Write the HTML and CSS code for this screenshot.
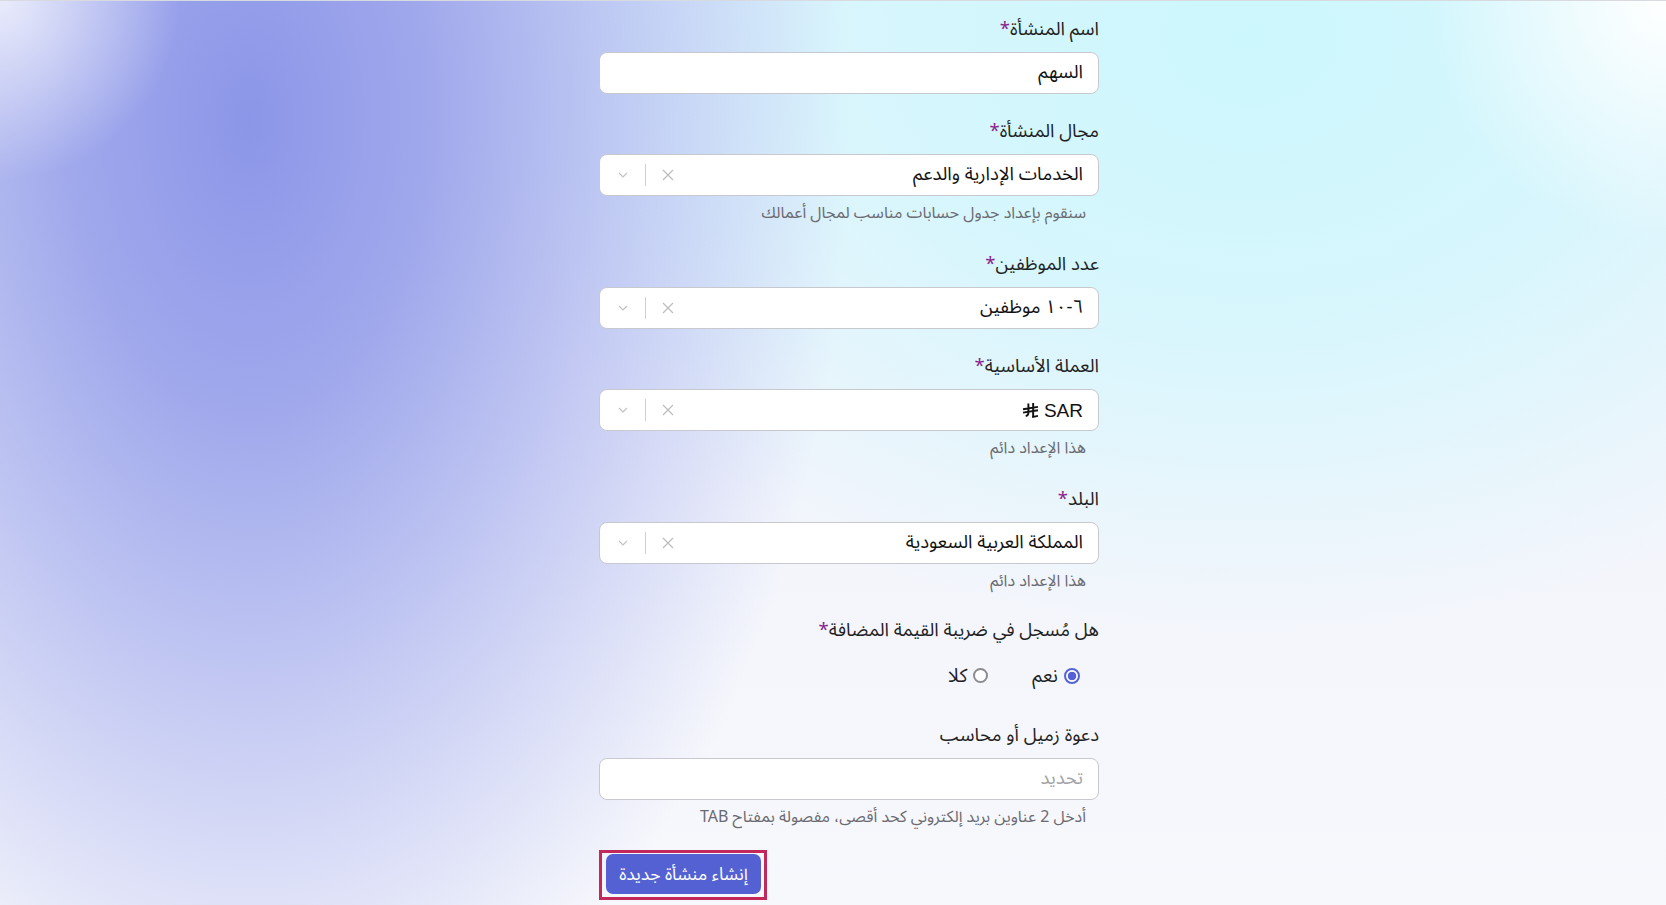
FILE: index.html
```html
<!DOCTYPE html>
<html lang="ar" dir="rtl">
<head>
<meta charset="utf-8">
<title>إنشاء منشأة جديدة</title>
<link rel="stylesheet" href="styles.css">
</head>
<body>
<main class="page">
  <form class="form">
    <div class="field">
      <div class="label">اسم المنشأة<span class="req">*</span></div>
      <div class="control"><span class="value">السهم</span></div>
    </div>

    <div class="field">
      <div class="label">مجال المنشأة<span class="req">*</span></div>
      <div class="control select">
        <span class="value">الخدمات الإدارية والدعم</span>
        <svg class="clear" width="12" height="12" viewBox="0 0 12 12"><path d="M1 1L11 11M11 1L1 11" stroke="#bdbdbd" stroke-width="1.3" fill="none"/></svg>
        <span class="sep"></span>
        <svg class="chev" width="10" height="6" viewBox="0 0 10 6"><path d="M1 1L5 5L9 1" stroke="#c2c2c2" stroke-width="1.2" fill="none"/></svg>
      </div>
      <div class="help">سنقوم بإعداد جدول حسابات مناسب لمجال أعمالك</div>
    </div>

    <div class="field">
      <div class="label">عدد الموظفين<span class="req">*</span></div>
      <div class="control select">
        <span class="value">٦-١٠ موظفين</span>
        <svg class="clear" width="12" height="12" viewBox="0 0 12 12"><path d="M1 1L11 11M11 1L1 11" stroke="#bdbdbd" stroke-width="1.3" fill="none"/></svg>
        <span class="sep"></span>
        <svg class="chev" width="10" height="6" viewBox="0 0 10 6"><path d="M1 1L5 5L9 1" stroke="#c2c2c2" stroke-width="1.2" fill="none"/></svg>
      </div>
    </div>

    <div class="field">
      <div class="label">العملة الأساسية<span class="req">*</span></div>
      <div class="control select">
        <span class="value"><span dir="ltr" class="cur"><svg class="riyal" width="17" height="17" viewBox="0 0 16 16"><path d="M6 1.5V10.5Q6 12.5 3.5 13.2M10.5 1V13.5M1 6.8L15 4.6M1 10L15 7.8M9.5 14.2L15 13" stroke="#111" stroke-width="1.8" fill="none"/></svg><span>SAR</span></span></span>
        <svg class="clear" width="12" height="12" viewBox="0 0 12 12"><path d="M1 1L11 11M11 1L1 11" stroke="#bdbdbd" stroke-width="1.3" fill="none"/></svg>
        <span class="sep"></span>
        <svg class="chev" width="10" height="6" viewBox="0 0 10 6"><path d="M1 1L5 5L9 1" stroke="#c2c2c2" stroke-width="1.2" fill="none"/></svg>
      </div>
      <div class="help">هذا الإعداد دائم</div>
    </div>

    <div class="field">
      <div class="label">البلد<span class="req">*</span></div>
      <div class="control select">
        <span class="value">المملكة العربية السعودية</span>
        <svg class="clear" width="12" height="12" viewBox="0 0 12 12"><path d="M1 1L11 11M11 1L1 11" stroke="#bdbdbd" stroke-width="1.3" fill="none"/></svg>
        <span class="sep"></span>
        <svg class="chev" width="10" height="6" viewBox="0 0 10 6"><path d="M1 1L5 5L9 1" stroke="#c2c2c2" stroke-width="1.2" fill="none"/></svg>
      </div>
      <div class="help">هذا الإعداد دائم</div>
    </div>

    <div class="field vat">
      <div class="label">هل مُسجل في ضريبة القيمة المضافة<span class="req">*</span></div>
      <div class="radios">
        <label class="radio"><span class="dot on"></span><span>نعم</span></label>
        <label class="radio"><span class="dot"></span><span>كلا</span></label>
      </div>
    </div>

    <div class="field last">
      <div class="label">دعوة زميل أو محاسب</div>
      <div class="control"><span class="placeholder">تحديد</span></div>
      <div class="help">أدخل 2 عناوين بريد إلكتروني كحد أقصى، مفصولة بمفتاح TAB</div>
    </div>

    <div class="actions">
      <div class="focus-ring"><button type="button" class="btn">إنشاء منشأة جديدة</button></div>
    </div>
  </form>
</main>
</body>
</html>
```
FILE: styles.css
```css
* { box-sizing: border-box; }
html, body { margin: 0; height: 100%; }
body {
  font-family: "Noto Sans Arabic", "Noto Sans", "DejaVu Sans", sans-serif;
  color: #222;
  border-top: 1px solid #d9dadf;
  overflow: hidden;
  background:
    radial-gradient(circle at 0 0, rgba(236,238,252,0.95) 0, rgba(236,238,252,0) 180px),
    radial-gradient(circle at 1666px 0, rgba(255,255,255,1) 0, rgba(255,255,255,0) 240px),
    radial-gradient(ellipse 600px 980px at 250px 120px, rgba(140,150,232,1) 0%, rgba(140,150,232,0.8) 30%, rgba(150,160,235,0.38) 70%, rgba(150,160,235,0) 100%),
    radial-gradient(ellipse 800px 600px at 1250px 40px, rgba(204,247,253,1) 0%, rgba(208,247,253,0.8) 45%, rgba(210,247,253,0) 100%),
    linear-gradient(180deg, #eef1fb 0%, #f7f8fc 100%);
}
.page {
  display: flex;
  justify-content: center;
  padding: 21px 0 0 32px;
  direction: ltr;
}
.form {
  width: 500px;
  direction: rtl;
  display: flex;
  flex-direction: column;
}
.field { margin-bottom: 30px; }
.field.vat { margin-top: -2px; }
.field.last { margin-bottom: 19px; }
.label {
  height: 24px;
  font-size: 18.5px;
  line-height: 16px;
  margin-bottom: 6px;
  color: #1f1f24;
  white-space: nowrap;
}
.req { color: #8a1f8c; }
.control {
  height: 42px;
  background: #fff;
  border: 1px solid #c8c9cf;
  border-radius: 8px;
  display: flex;
  align-items: center;
  padding: 0 15px 0 18px;
  font-size: 18.5px;
  line-height: 24px;
  color: #111;
}
.value { flex: 1; }
.placeholder { color: #a3a3a8; }
.cur { display: inline-flex; align-items: center; gap: 5px; font-family: "Liberation Sans", "Noto Sans", sans-serif; font-size: 19px; line-height: 1; vertical-align: middle; }
.riyal { display: block; }
.clear { flex: none; display: block; }
.sep { flex: none; width: 1px; height: 22px; background: #d0d0d4; margin: 0 16px 0 17px; }
.chev { flex: none; display: block; }
.help {
  height: 27px;
  margin-top: 4px;
  font-size: 16px;
  line-height: 27px;
  color: #6a6a70;
  padding-right: 13px;
  white-space: nowrap;
}
.radios {
  height: 45px;
  display: flex;
  align-items: center;
  gap: 44px;
  padding-right: 19px;
}
.radio {
  display: flex;
  align-items: center;
  gap: 6px;
  font-size: 19px;
  line-height: 24px;
  color: #1f1f24;
}
.dot {
  width: 15px;
  height: 15px;
  border-radius: 50%;
  border: 2.5px solid #8b8b90;
  background: #fff;
  flex: none;
}
.dot.on {
  width: 16px;
  height: 16px;
  border: 2px solid #5562d6;
  background: radial-gradient(circle, #5562d6 0, #5562d6 4px, #fff 4.6px);
}
.actions { display: flex; justify-content: flex-end; }
.focus-ring {
  border: 3px solid #c2285a;
  padding: 1px 3px 3px 4px;
}
.btn {
  display: block;
  width: 155px;
  height: 40px;
  border: 0;
  border-radius: 7px;
  background: #5361d3;
  color: #fff;
  font-family: inherit;
  font-size: 17.5px;
  padding: 0;
}
```
